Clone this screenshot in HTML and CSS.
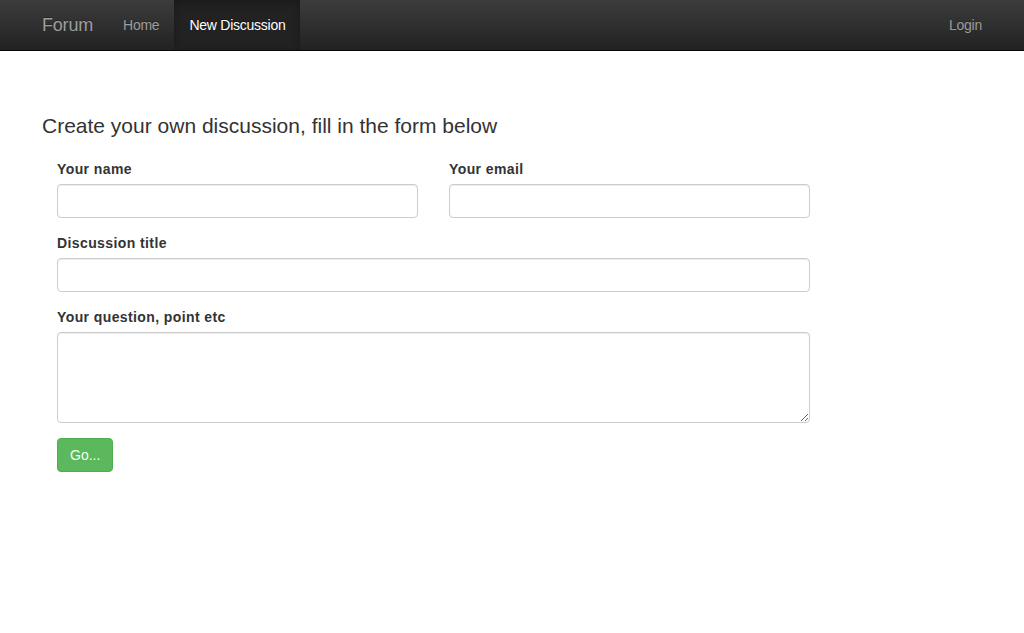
FILE: index.html
```html
<!DOCTYPE html>
<html lang="en">
<head>
<meta charset="utf-8">
<title>Forum - New Discussion</title>
<link rel="stylesheet" href="styles.css">
</head>
<body>
<nav class="navbar">
  <div class="navbar-inner">
    <a class="brand" href="#">Forum</a>
    <ul class="nav">
      <li><a href="#">Home</a></li>
      <li class="active"><a href="#">New Discussion</a></li>
    </ul>
    <ul class="nav nav-right">
      <li><a href="#">Login</a></li>
    </ul>
  </div>
</nav>
<main class="container">
  <h3 class="title">Create your own discussion, fill in the form below</h3>
  <form class="form">
    <div class="row">
      <div class="form-group">
        <label for="name">Your name</label>
        <input id="name" type="text" class="control">
      </div>
      <div class="form-group">
        <label for="email">Your email</label>
        <input id="email" type="email" class="control">
      </div>
    </div>
    <div class="form-group">
      <label for="title">Discussion title</label>
      <input id="title" type="text" class="control">
    </div>
    <div class="form-group">
      <label for="body">Your question, point etc</label>
      <textarea id="body" class="control textarea"></textarea>
    </div>
    <button type="button" class="btn">Go...</button>
  </form>
</main>
</body>
</html>
```

FILE: styles.css
```css
* { box-sizing: border-box; }
html, body { margin: 0; padding: 0; }
body {
  font-family: "Liberation Sans", Arial, Helvetica, sans-serif;
  font-size: 14px;
  line-height: 1.428571;
  color: #333;
  background: #fff;
}
.navbar {
  height: 51px;
  background: linear-gradient(to bottom, #3c3c3c 0%, #222 100%);
  border-bottom: 1px solid #080808;
}
.navbar-inner {
  width: 970px;
  margin: 0 auto;
  padding: 0 15px;
  display: flex;
  align-items: stretch;
  height: 50px;
}
.brand {
  display: block;
  margin-left: -15px;
  padding: 15px;
  height: 50px;
  font-size: 18px;
  line-height: 20px;
  letter-spacing: -0.2px;
  color: #9d9d9d;
  text-decoration: none;
  text-shadow: 0 -1px 0 rgba(0,0,0,.25);
}
.nav {
  list-style: none;
  margin: 0;
  padding: 0;
  display: flex;
}
.nav li a {
  display: block;
  padding: 15px;
  line-height: 20px;
  letter-spacing: -0.25px;
  color: #9d9d9d;
  text-decoration: none;
  text-shadow: 0 -1px 0 rgba(0,0,0,.25);
}
.nav li.active a {
  color: #fff;
  background: #222;
  box-shadow: inset 0 3px 9px rgba(0,0,0,.25);
}
.nav-right {
  margin-left: auto;
  margin-right: -15px;
}
.container {
  width: 970px;
  margin: 0 auto;
  padding: 0 15px;
}
.title {
  margin: 63px 0 22px;
  font-size: 21px;
  font-weight: normal;
  line-height: 1.1;
  color: #333;
}
.form {
  margin-left: 15px;
  width: 753px;
}
.row {
  display: flex;
  gap: 31px;
}
.row .form-group { flex: 1; }
.form-group { margin-bottom: 15px; }
label {
  display: block;
  font-weight: bold;
  letter-spacing: 0.4px;
  margin-bottom: 5px;
  line-height: 20px;
}
.control {
  display: block;
  width: 100%;
  height: 34px;
  padding: 6px 12px;
  font: inherit;
  color: #555;
  background: #fff;
  border: 1px solid #ccc;
  border-radius: 4px;
  box-shadow: inset 0 1px 1px rgba(0,0,0,.075);
}
.textarea {
  height: 91px;
  resize: vertical;
}
.btn {
  display: block;
  height: 34px;
  padding: 6px 12px;
  font: inherit;
  line-height: 20px;
  color: #f4fff4;
  background: #5cb85c;
  border: 1px solid #4cae4c;
  border-radius: 4px;
  margin-top: 1px;
  cursor: pointer;
}
```
